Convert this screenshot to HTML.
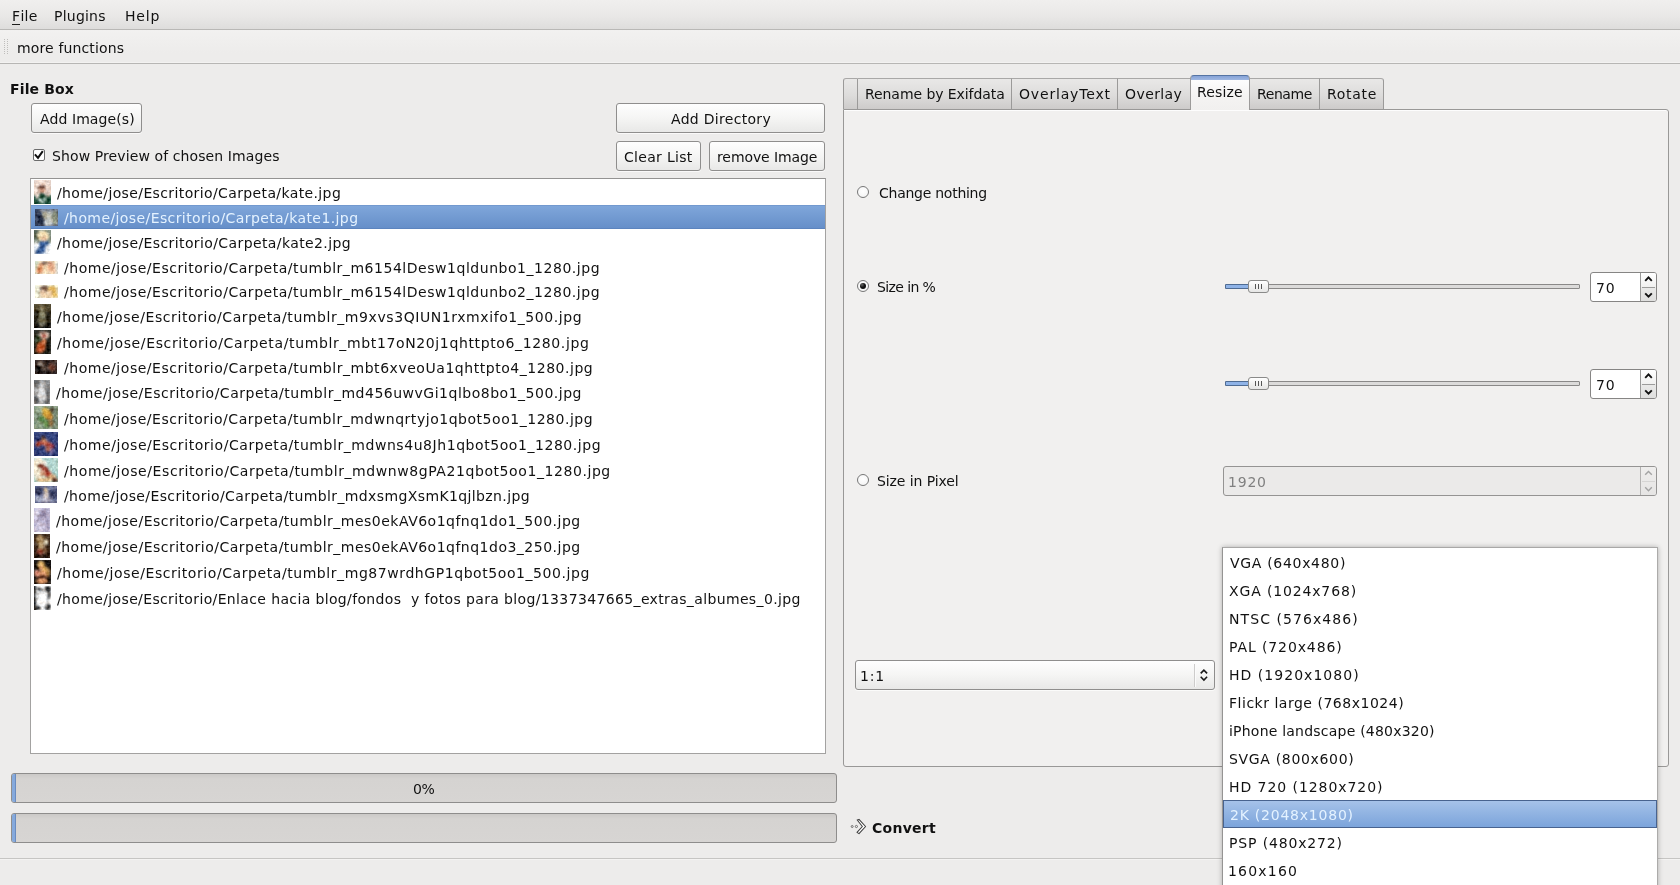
<!DOCTYPE html>
<html lang="en">
<head>
<meta charset="utf-8">
<title>Image converter</title>
<style>
html,body{margin:0;padding:0}
body{width:1680px;height:885px;overflow:hidden;position:relative;background:#edeceb;font-family:"DejaVu Sans","Liberation Sans",sans-serif;font-size:14px;color:#1a1a1a}
.a{position:absolute;box-sizing:border-box}
.t{position:absolute;will-change:transform;white-space:pre;line-height:20px;height:20px;color:#111}
.t.b{font-weight:bold}
.t.sel{color:#e4f2ff}
.t.dis{color:#808080}
.t u{text-decoration:none;border-bottom:1px solid #1c1c1c;display:inline-block;line-height:15px}
.th{position:absolute;display:block}
.btn{position:absolute;box-sizing:border-box;border:1px solid #8f8e8d;border-radius:3px;background:linear-gradient(#fefefe,#f5f5f4 50%,#e8e8e7);box-shadow:0 1px 0 rgba(255,255,255,.7)}
.tab{position:absolute;box-sizing:border-box;top:78px;height:31px;border:1px solid #9b9a99;border-top-color:#a9a8a7;border-bottom:none;border-left:none;background:linear-gradient(#e9e8e7,#dddcdb 55%,#cdcbca)}
.radio{position:absolute;box-sizing:border-box;width:12px;height:12px;border-radius:50%;border:1px solid #777;background:radial-gradient(circle at 50% 40%,#fff,#f2f2f2)}
.radio.on::after{content:"";position:absolute;left:2px;top:2px;width:6px;height:6px;border-radius:50%;background:radial-gradient(circle at 35% 30%,#666,#111 45%)}
.trough{position:absolute;box-sizing:border-box;height:5px;border:1px solid #8a8988;background:#dcdbda;border-radius:1px}
.fill{position:absolute;box-sizing:border-box;height:5px;border:1px solid #4f6c93;background:#8fb3e7;border-radius:1px}
.knob{position:absolute;box-sizing:border-box;width:21px;height:13px;border:1px solid #8a8a89;border-radius:3px;background:linear-gradient(#ffffff,#e6e6e5)}
.knob i{position:absolute;top:3px;width:1px;height:5px;background:#555}
.spin{position:absolute;box-sizing:border-box;border:1px solid #868584;border-radius:3px;background:#fff;overflow:hidden}
.spin .bt{position:absolute;right:0;top:0;bottom:0;width:15px;border-left:1px solid #9a9a99;background:linear-gradient(#ffffff,#f1f1f0 50%,#eaeae9 50%,#dfdfde)}
.spin .bt b{position:absolute;left:1px;right:1px;top:14px;height:1px;background:#9c9c9b}
.spin.dis{background:#ebeae9;border-color:#959493}
.spin.dis .bt{background:linear-gradient(#efeeed,#e6e5e4);border-left-color:#b3b2b1}
.spin.dis .bt b{background:#d6d5d4}
.prog{position:absolute;box-sizing:border-box;left:11px;width:826px;height:30px;border:1px solid #8e8d8c;border-radius:3px;background:linear-gradient(#cbc9c7,#d5d3d1 5px,#d7d5d3)}
.prog i{position:absolute;left:0;top:0;bottom:0;width:3px;background:#85a9dc;border-right:1px solid #6a8cc0;border-radius:2px 0 0 2px}
</style>
</head>
<body>
<svg width="0" height="0" style="position:absolute"><defs><filter id="bl" x="-10%" y="-10%" width="120%" height="120%" color-interpolation-filters="sRGB"><feGaussianBlur stdDeviation="0.8" result="b"/><feTurbulence type="fractalNoise" baseFrequency="0.32" numOctaves="2" seed="7" result="n"/><feColorMatrix in="n" type="matrix" values="0.5 0.5 0.3 0 0  0.4 0.5 0.4 0 0  0.3 0.5 0.5 0 0  0 0 0 0 1" result="m"/><feComposite in="b" in2="m" operator="arithmetic" k1="0" k2="1" k3="0.55" k4="-0.33"/></filter></defs></svg>

<!-- menubar -->
<div class="a" style="left:0;top:0;width:1680px;height:30px;background:linear-gradient(#f0efee,#e9e8e7 55%,#deddDC);border-bottom:1px solid #b9b8b6"></div>
<!-- toolbar -->
<div class="a" style="left:0;top:30px;width:1680px;height:33px;background:linear-gradient(#f2f1f0,#edeceb 70%)"></div>
<div class="a" style="left:0;top:62px;width:1680px;height:1px;background:#f3f2f1"></div>
<div class="a" style="left:0;top:63px;width:1680px;height:1px;background:#b7b6b4"></div>
<div class="a" style="left:4px;top:39px;width:1px;height:16px;background:repeating-linear-gradient(#bfbebc 0,#bfbebc 1px,transparent 1px,transparent 2px)"></div>
<div class="a" style="left:7px;top:39px;width:1px;height:16px;background:repeating-linear-gradient(#bfbebc 0,#bfbebc 1px,transparent 1px,transparent 2px)"></div>

<!-- left buttons -->
<div class="btn" style="left:31px;top:103px;width:111px;height:30px"></div>
<div class="btn" style="left:616px;top:103px;width:209px;height:30px"></div>
<div class="btn" style="left:616px;top:141px;width:85px;height:30px"></div>
<div class="btn" style="left:709px;top:141px;width:116px;height:30px"></div>

<!-- checkbox -->
<div class="a" style="left:33px;top:149px;width:12px;height:12px;border:1px solid #6c6c6c;background:#fff;border-radius:2px"></div>
<svg class="a" style="left:33px;top:147px" width="15" height="15" viewBox="0 0 15 15"><path d="M1.9 7.3 L5 10.9 L9.8 4.1" fill="none" stroke="#111" stroke-width="2"/></svg>

<!-- file list -->
<div class="a" style="left:30px;top:178px;width:796px;height:576px;background:#fff;border:1px solid #a3a2a1;border-top-color:#949392"></div>
<div class="a" style="left:31px;top:205px;width:794px;height:24px;background:linear-gradient(#7fa6da,#668fc9);border-top:1px solid #7299cf;border-bottom:1px solid #5c84be"></div>

<!-- progress bars -->
<div class="prog" style="top:773px"><i></i></div>
<div class="prog" style="top:813px"><i></i></div>

<!-- bottom separator -->
<div class="a" style="left:0;top:858px;width:1680px;height:1px;background:#c6c5c3"></div>
<div class="a" style="left:0;top:859px;width:1680px;height:1px;background:#f4f3f2"></div>

<!-- notebook -->
<div class="a" style="left:843px;top:109px;width:826px;height:658px;background:#f1f0ef;border:1px solid #999897;border-radius:0 3px 3px 3px;box-shadow:inset 0 1px 0 #fdfdfd"></div>
<div class="tab" style="left:843px;width:15px;border-left:1px solid #9b9a99;border-radius:3px 0 0 0"></div>
<div class="tab" style="left:858px;width:154px"></div>
<div class="tab" style="left:1012px;width:106px"></div>
<div class="tab" style="left:1118px;width:73px"></div>
<div class="tab" style="left:1250px;width:70px"></div>
<div class="tab" style="left:1320px;width:64px;border-radius:0 3px 0 0"></div>
<div class="a" style="left:1190px;top:75px;width:60px;height:35px;border:1px solid #9c9b9a;border-top-color:#5574a3;border-bottom:none;border-radius:4px 4px 0 0;background:linear-gradient(#86a3d7 0,#9fb7e1 4px,#fdfdfd 4px,#f4f3f2 60%,#f1f0ef)"></div>

<!-- radios -->
<div class="radio" style="left:857px;top:186px"></div>
<div class="radio on" style="left:857px;top:280px"></div>
<div class="radio" style="left:857px;top:474px"></div>

<!-- sliders -->
<div class="trough" style="left:1225px;top:284px;width:355px"></div>
<div class="fill" style="left:1225px;top:284px;width:26px"></div>
<div class="knob" style="left:1248px;top:280px"><i style="left:6px"></i><i style="left:9px"></i><i style="left:12px"></i></div>
<div class="trough" style="left:1225px;top:381px;width:355px"></div>
<div class="fill" style="left:1225px;top:381px;width:26px"></div>
<div class="knob" style="left:1248px;top:377px"><i style="left:6px"></i><i style="left:9px"></i><i style="left:12px"></i></div>

<!-- spin boxes -->
<div class="spin" style="left:1590px;top:272px;width:67px;height:30px"><div class="bt"><b></b>
<svg class="a" style="left:0;top:0" width="16" height="28" viewBox="0 0 16 28"><path d="M4.2 7.8 L7.5 4.4 L10.8 7.8 M4.2 20.3 L7.5 23.7 L10.8 20.3" fill="none" stroke="#111" stroke-width="1.9"/></svg></div></div>
<div class="spin" style="left:1590px;top:369px;width:67px;height:30px"><div class="bt"><b></b>
<svg class="a" style="left:0;top:0" width="16" height="28" viewBox="0 0 16 28"><path d="M4.2 7.8 L7.5 4.4 L10.8 7.8 M4.2 20.3 L7.5 23.7 L10.8 20.3" fill="none" stroke="#111" stroke-width="1.9"/></svg></div></div>
<div class="spin dis" style="left:1223px;top:466px;width:434px;height:30px"><div class="bt"><b></b>
<svg class="a" style="left:0;top:0" width="16" height="28" viewBox="0 0 16 28"><path d="M4.2 7.8 L7.5 4.4 L10.8 7.8 M4.2 20.3 L7.5 23.7 L10.8 20.3" fill="none" stroke="#a3a3a3" stroke-width="1.4"/></svg></div></div>

<!-- combo -->
<div class="btn" style="left:855px;top:660px;width:360px;height:30px"></div>
<div class="a" style="left:1194px;top:664px;width:2px;height:23px;background:linear-gradient(90deg,#cdcccb 50%,#fbfbfb 50%)"></div>
<svg class="a" style="left:1197px;top:665px" width="14" height="20" viewBox="0 0 14 20"><path d="M3.7 8.4 L6.9 5.1 L10.1 8.4 M3.7 11.8 L6.9 15 L10.1 11.8" fill="none" stroke="#1a1a1a" stroke-width="1.6"/></svg>

<!-- convert icon -->
<svg class="a" style="left:850px;top:818px" width="18" height="18" viewBox="0 0 18 18"><circle cx="2.2" cy="8.5" r="1" fill="none" stroke="#555" stroke-width=".8"/><circle cx="6.4" cy="8.5" r="1.1" fill="none" stroke="#555" stroke-width=".8"/><path d="M7.2 2 L9 1.4 L15.6 8.5 L9 15.6 L7 14.4 L12.4 8.5 Z" fill="#fff" stroke="#3c3c3c" stroke-width="1.05" stroke-linejoin="round"/></svg>

<!-- dropdown popup -->
<div class="a" style="left:1222px;top:547px;width:436px;height:345px;background:#fff;border:1px solid #959493;border-top-color:#a9a8a7;border-right-color:#acabaa;box-shadow:0 0 5px rgba(0,0,0,.28)"></div>
<div class="a" style="left:1223px;top:800px;width:434px;height:28px;background:linear-gradient(#a6c2e9,#90b3e2 50%,#7ca4db);border:1px solid #48638f"></div>

<svg class="th" style="left:34px;top:180px" width="17" height="24" viewBox="0 0 17 24"><g filter="url(#bl)"><rect x="-4" y="-4" width="25" height="32" fill="#dcc8bd"/><ellipse cx="8" cy="6" rx="7" ry="6" fill="#ead6cb"/><rect x="-2" y="15" width="21" height="12" fill="#12432f"/><ellipse cx="8" cy="9" rx="3.2" ry="4.5" fill="#b98268"/><ellipse cx="8" cy="7" rx="3.5" ry="1.2" fill="#4a2f2a"/><ellipse cx="3" cy="13" rx="2.5" ry="6" fill="#e3cfc4"/><ellipse cx="14" cy="12" rx="2.5" ry="5" fill="#d9c4b8"/><ellipse cx="8" cy="15" rx="2.5" ry="2" fill="#0f3a2a"/><ellipse cx="6" cy="20" rx="2" ry="1.5" fill="#dfe9e2"/><ellipse cx="11" cy="19" rx="1.5" ry="1.5" fill="#cfe0d6"/><ellipse cx="9" cy="22" rx="2" ry="1" fill="#e6efe9"/></g></svg>
<svg class="th" style="left:35px;top:209px" width="23" height="17" viewBox="0 0 23 17"><g filter="url(#bl)"><rect x="-4" y="-4" width="31" height="25" fill="#55607a"/><rect x="-2" y="-2" width="9" height="21" fill="#2b3650"/><ellipse cx="10" cy="6" rx="3" ry="5" fill="#a9a58f"/><ellipse cx="15" cy="8" rx="3" ry="6" fill="#b9bab0"/><ellipse cx="20" cy="8" rx="3" ry="7" fill="#7f8570"/><ellipse cx="13" cy="14" rx="4" ry="3" fill="#d0d3cf"/><ellipse cx="12" cy="2" rx="8" ry="1.5" fill="#8e939a"/><ellipse cx="7" cy="12" rx="2" ry="5" fill="#1c2438"/><ellipse cx="20" cy="14" rx="2" ry="2" fill="#b8b890"/></g></svg>
<svg class="th" style="left:34px;top:230px" width="17" height="24" viewBox="0 0 17 24"><g filter="url(#bl)"><rect x="-4" y="-4" width="25" height="32" fill="#7c8878"/><rect x="-2" y="-2" width="6" height="12" fill="#4f5a4a"/><ellipse cx="9" cy="6" rx="6" ry="5.5" fill="#ecd9ae"/><ellipse cx="10" cy="9" rx="3" ry="3" fill="#dcb492"/><rect x="-2" y="13" width="21" height="13" fill="#dfe4ea"/><ellipse cx="8" cy="17" rx="4" ry="6" fill="#2c528e"/><ellipse cx="5" cy="22" rx="4" ry="2.5" fill="#274a82"/><ellipse cx="14" cy="20" rx="3" ry="4" fill="#eef0f2"/><ellipse cx="3" cy="15" rx="2.5" ry="3" fill="#f2f3f4"/><ellipse cx="12" cy="13" rx="3" ry="2" fill="#35598f"/></g></svg>
<svg class="th" style="left:35px;top:261px" width="23" height="13" viewBox="0 0 23 13"><g filter="url(#bl)"><rect x="-4" y="-4" width="31" height="21" fill="#ecd9ba"/><rect x="-2" y="-2" width="6" height="17" fill="#c9cfb6"/><ellipse cx="6" cy="7" rx="3.5" ry="4.5" fill="#de9466"/><ellipse cx="4" cy="10" rx="3" ry="2.5" fill="#d88458"/><ellipse cx="11" cy="8" rx="3.5" ry="4" fill="#ebd3ae"/><ellipse cx="16" cy="6" rx="3.5" ry="4.5" fill="#dfa17c"/><ellipse cx="9" cy="2" rx="3" ry="1.5" fill="#5a4038"/><ellipse cx="15" cy="2" rx="2.5" ry="1.2" fill="#a86850"/><rect x="21" y="-2" width="4" height="17" fill="#d5d9d6"/><ellipse cx="18" cy="10" rx="3" ry="2.5" fill="#e6b896"/></g></svg>
<svg class="th" style="left:35px;top:285px" width="23" height="13" viewBox="0 0 23 13"><g filter="url(#bl)"><rect x="-4" y="-4" width="31" height="21" fill="#e9e5cf"/><ellipse cx="9" cy="4" rx="4" ry="3.5" fill="#5f4234"/><ellipse cx="8" cy="8" rx="3" ry="3.5" fill="#e6c4a4"/><ellipse cx="17" cy="5" rx="4.5" ry="4" fill="#d6a648"/><ellipse cx="15" cy="8" rx="2.5" ry="3" fill="#e9c9a6"/><ellipse cx="12" cy="11" rx="7" ry="2.5" fill="#e2c49c"/><ellipse cx="20" cy="10" rx="2.5" ry="2.5" fill="#dcb04e"/><ellipse cx="2" cy="7" rx="2.5" ry="6" fill="#e3e2cc"/></g></svg>
<svg class="th" style="left:34px;top:304px" width="17" height="24" viewBox="0 0 17 24"><g filter="url(#bl)"><rect x="-4" y="-4" width="25" height="32" fill="#2a2416"/><rect x="-2" y="-2" width="21" height="9" fill="#4c4228"/><ellipse cx="8" cy="5" rx="2.2" ry="2.8" fill="#8f8462"/><ellipse cx="8" cy="12" rx="4" ry="6" fill="#666248"/><ellipse cx="8" cy="10" rx="2.5" ry="3" fill="#8a8668"/><rect x="-2" y="19" width="21" height="8" fill="#0b0a07"/><ellipse cx="8" cy="18" rx="6" ry="1.2" fill="#7f7a5e"/><ellipse cx="8" cy="21" rx="4" ry="0.7" fill="#c9c2a4"/><ellipse cx="2" cy="12" rx="2" ry="6" fill="#1a160d"/><ellipse cx="15" cy="12" rx="2" ry="6" fill="#1c180e"/></g></svg>
<svg class="th" style="left:34px;top:330px" width="17" height="24" viewBox="0 0 17 24"><g filter="url(#bl)"><rect x="-4" y="-4" width="25" height="32" fill="#1c1c15"/><ellipse cx="10" cy="5" rx="5.5" ry="4" fill="#d6bcab"/><ellipse cx="10" cy="6" rx="2.5" ry="1.3" fill="#a2382a"/><ellipse cx="9" cy="3" rx="3" ry="1" fill="#6a4a40"/><ellipse cx="4" cy="10" rx="2.5" ry="5" fill="#3a4a30"/><ellipse cx="7" cy="17" rx="4.5" ry="5.5" fill="#b04a20"/><ellipse cx="10" cy="12" rx="2.5" ry="3" fill="#c46a3a"/><ellipse cx="5" cy="20" rx="3" ry="3" fill="#c2562a"/><ellipse cx="14" cy="17" rx="2" ry="6" fill="#15140f"/><ellipse cx="2" cy="3" rx="2" ry="3" fill="#2a2a22"/></g></svg>
<svg class="th" style="left:35px;top:360px" width="22" height="14" viewBox="0 0 22 14"><g filter="url(#bl)"><rect x="-4" y="-4" width="30" height="22" fill="#2b1d19"/><ellipse cx="5" cy="4" rx="2.5" ry="2" fill="#b9a898"/><ellipse cx="3" cy="9" rx="3" ry="4" fill="#0f0b0a"/><ellipse cx="9" cy="7" rx="3" ry="4" fill="#5a4a40"/><ellipse cx="12" cy="4" rx="2" ry="3" fill="#1a1210"/><ellipse cx="15" cy="8" rx="1.8" ry="1.5" fill="#e8dcd4"/><ellipse cx="17" cy="7" rx="3.5" ry="4" fill="#6e3c2c"/><ellipse cx="20" cy="3" rx="2.5" ry="2.5" fill="#4a3a34"/><ellipse cx="11" cy="12" rx="8" ry="1.5" fill="#140e0c"/></g></svg>
<svg class="th" style="left:34px;top:380px" width="16" height="24" viewBox="0 0 16 24"><g filter="url(#bl)"><rect x="-4" y="-4" width="24" height="32" fill="#8c8c8c"/><rect x="-2" y="-2" width="8" height="8" fill="#5e5e5e"/><ellipse cx="8" cy="5" rx="3" ry="3" fill="#bdbdbd"/><ellipse cx="7" cy="13" rx="3.5" ry="7" fill="#dedede"/><ellipse cx="10" cy="16" rx="2.5" ry="4" fill="#cfcfcf"/><ellipse cx="4" cy="11" rx="1.5" ry="4" fill="#c4c4c4"/><ellipse cx="14" cy="12" rx="2" ry="8" fill="#6c6c6c"/><ellipse cx="2" cy="20" rx="2" ry="3" fill="#3c3c3c"/><ellipse cx="13" cy="22" rx="3" ry="1.5" fill="#4a4a4a"/><ellipse cx="8" cy="22" rx="3" ry="1.5" fill="#b0b0b0"/></g></svg>
<svg class="th" style="left:34px;top:406px" width="24" height="23" viewBox="0 0 24 23"><g filter="url(#bl)"><rect x="-4" y="-4" width="32" height="31" fill="#7a8c76"/><ellipse cx="5" cy="4" rx="4" ry="5" fill="#93a58a"/><ellipse cx="13" cy="8" rx="4.5" ry="5" fill="#c9962e"/><ellipse cx="11" cy="4" rx="3" ry="2.5" fill="#d9b048"/><ellipse cx="18" cy="4" rx="2.2" ry="2.2" fill="#3a2a1a"/><ellipse cx="16" cy="11" rx="3" ry="3" fill="#b87a28"/><ellipse cx="8" cy="13" rx="3.5" ry="3" fill="#4d7a3c"/><ellipse cx="17" cy="17" rx="2.5" ry="4" fill="#7a5a30"/><ellipse cx="12" cy="18" rx="2.5" ry="3.5" fill="#5f8a48"/><ellipse cx="4" cy="19" rx="4" ry="3" fill="#8a9c80"/><ellipse cx="21" cy="12" rx="2" ry="5" fill="#6c7e6a"/></g></svg>
<svg class="th" style="left:34px;top:432px" width="24" height="24" viewBox="0 0 24 24"><g filter="url(#bl)"><rect x="-4" y="-4" width="32" height="32" fill="#2d3b72"/><ellipse cx="9" cy="6" rx="2.5" ry="2.2" fill="#3a2420"/><ellipse cx="10" cy="9" rx="3" ry="2.5" fill="#c28866"/><ellipse cx="6" cy="11" rx="4" ry="2" fill="#a8402e"/><ellipse cx="13" cy="12" rx="4" ry="2.5" fill="#b8563e"/><ellipse cx="17" cy="14" rx="3.5" ry="2.5" fill="#8f2c34"/><ellipse cx="14" cy="17" rx="2.5" ry="3" fill="#b06a5a"/><ellipse cx="4" cy="13" rx="2.5" ry="1.5" fill="#b84a30"/><ellipse cx="18" cy="19" rx="2" ry="3" fill="#6a5a8a"/><ellipse cx="20" cy="5" rx="4" ry="4" fill="#34447e"/><ellipse cx="5" cy="21" rx="5" ry="3" fill="#27346a"/></g></svg>
<svg class="th" style="left:34px;top:458px" width="24" height="24" viewBox="0 0 24 24"><g filter="url(#bl)"><rect x="-4" y="-4" width="32" height="32" fill="#a6cbc4"/><ellipse cx="4" cy="10" rx="7" ry="11" fill="#eadfc8"/><ellipse cx="11" cy="5" rx="2" ry="2.5" fill="#f1ebe3"/><ellipse cx="7" cy="8" rx="3" ry="2" fill="#6e2a1c"/><ellipse cx="11" cy="12" rx="3.5" ry="3.5" fill="#8a2c1e"/><ellipse cx="14" cy="16" rx="3.5" ry="3" fill="#a63a2a"/><ellipse cx="9" cy="15" rx="2.5" ry="3" fill="#c89070"/><ellipse cx="18" cy="19" rx="4" ry="2.5" fill="#c99a6a"/><ellipse cx="21" cy="22" rx="3" ry="2" fill="#5a3020"/><ellipse cx="10" cy="22" rx="8" ry="2.5" fill="#d8b483"/><ellipse cx="20" cy="6" rx="4" ry="5" fill="#b2d3cc"/></g></svg>
<svg class="th" style="left:35px;top:486px" width="22" height="17" viewBox="0 0 22 17"><g filter="url(#bl)"><rect x="-4" y="-4" width="30" height="25" fill="#4d5378"/><ellipse cx="4" cy="5" rx="4" ry="3.5" fill="#2c3150"/><ellipse cx="18" cy="8" rx="4" ry="5" fill="#343a5c"/><ellipse cx="11" cy="4" rx="2.2" ry="3" fill="#d9c09a"/><ellipse cx="11" cy="10" rx="3" ry="4" fill="#cdbfb8"/><ellipse cx="11" cy="14" rx="5" ry="2.5" fill="#b9b3c0"/><ellipse cx="4" cy="13" rx="4" ry="3" fill="#aab0c6"/><ellipse cx="16" cy="2" rx="5" ry="1.5" fill="#7d86a8"/><ellipse cx="7" cy="9" rx="1.5" ry="3" fill="#6a6f92"/><ellipse cx="19" cy="15" rx="3" ry="1.5" fill="#8a8ea8"/></g></svg>
<svg class="th" style="left:34px;top:508px" width="16" height="24" viewBox="0 0 16 24"><g filter="url(#bl)"><rect x="-4" y="-4" width="24" height="32" fill="#b5adc7"/><ellipse cx="9" cy="7" rx="4.5" ry="5" fill="#8a809f"/><ellipse cx="3" cy="5" rx="3" ry="5" fill="#d3cde0"/><ellipse cx="8" cy="17" rx="5" ry="6" fill="#c0b8cf"/><ellipse cx="13" cy="15" rx="2.5" ry="6" fill="#a9a0bd"/><ellipse cx="4" cy="20" rx="3" ry="4" fill="#cac3d8"/><ellipse cx="9" cy="11" rx="2.5" ry="2.5" fill="#a79cb6"/></g></svg>
<svg class="th" style="left:34px;top:534px" width="16" height="24" viewBox="0 0 16 24"><g filter="url(#bl)"><rect x="-4" y="-4" width="24" height="32" fill="#2e1d11"/><ellipse cx="6" cy="6" rx="4" ry="5" fill="#a58558"/><ellipse cx="7" cy="12" rx="3" ry="4" fill="#b89a6c"/><ellipse cx="12" cy="8" rx="2" ry="3" fill="#e9e0c6"/><ellipse cx="6" cy="18" rx="3.5" ry="3" fill="#8a3c2a"/><ellipse cx="11" cy="16" rx="2.5" ry="4" fill="#6a4a30"/><ellipse cx="13" cy="3" rx="2.5" ry="3" fill="#4a3420"/><ellipse cx="3" cy="22" rx="4" ry="2" fill="#160c06"/><ellipse cx="12" cy="22" rx="3" ry="2" fill="#1e120a"/></g></svg>
<svg class="th" style="left:34px;top:560px" width="17" height="24" viewBox="0 0 17 24"><g filter="url(#bl)"><rect x="-4" y="-4" width="25" height="32" fill="#120d09"/><ellipse cx="7" cy="5" rx="3.5" ry="4" fill="#dcae62"/><ellipse cx="10" cy="10" rx="3" ry="4" fill="#d2a050"/><ellipse cx="7" cy="8" rx="2" ry="2.5" fill="#d99a70"/><ellipse cx="8" cy="15" rx="7" ry="4" fill="#d48c5e"/><ellipse cx="3" cy="13" rx="2.5" ry="3" fill="#e2917c"/><ellipse cx="8" cy="17" rx="5" ry="1.5" fill="#2c1210"/><ellipse cx="8" cy="21" rx="6" ry="3" fill="#cf8a5a"/><ellipse cx="14" cy="12" rx="2" ry="4" fill="#b98a4a"/><ellipse cx="15" cy="4" rx="2" ry="4" fill="#0c0806"/></g></svg>
<svg class="th" style="left:34px;top:586px" width="17" height="24" viewBox="0 0 17 24"><g filter="url(#bl)"><rect x="-4" y="-4" width="25" height="32" fill="#f1f1f1"/><rect x="-2" y="-2" width="4" height="30" fill="#101010"/><ellipse cx="3" cy="8" rx="1.5" ry="5" fill="#e8e8e8"/><ellipse cx="14" cy="3" rx="3" ry="3" fill="#141414"/><ellipse cx="15" cy="9" rx="1.5" ry="4" fill="#2a2a2a"/><ellipse cx="14" cy="16" rx="2" ry="3" fill="#e0e0e0"/><ellipse cx="14" cy="21" rx="3" ry="3" fill="#0e0e0e"/><ellipse cx="13" cy="20" rx="1.2" ry="1.2" fill="#d0d0d0"/><ellipse cx="8" cy="4" rx="2.5" ry="2.5" fill="#cfcfcf"/><ellipse cx="8" cy="4" rx="1.2" ry="1.2" fill="#555"/><ellipse cx="4" cy="22" rx="3" ry="2" fill="#2a2a2a"/><ellipse cx="9" cy="13" rx="2" ry="5" fill="#ffffff"/><ellipse cx="5" cy="3" rx="2" ry="2" fill="#3a3a3a"/></g></svg>
<div class="t" id="m1" style="left:12.00px;top:6px;letter-spacing:0.330px"><u>F</u>ile</div>
<div class="t" id="m2" style="left:54.00px;top:6px;letter-spacing:0.227px">Plugins</div>
<div class="t" id="m3" style="left:125.00px;top:6px;letter-spacing:0.800px">Help</div>
<div class="t" id="tb" style="left:17.00px;top:38px;letter-spacing:0.137px">more functions</div>
<div class="t b" id="fb" style="left:10.00px;top:79px;letter-spacing:0.147px">File Box</div>
<div class="t" id="b1" style="left:40.00px;top:109px;letter-spacing:0.089px">Add Image(s)</div>
<div class="t" id="cb" style="left:52.00px;top:146px;letter-spacing:0.101px">Show Preview of chosen Images</div>
<div class="t" id="b2" style="left:671.00px;top:109px;letter-spacing:0.303px">Add Directory</div>
<div class="t" id="b3" style="left:624.00px;top:147px;letter-spacing:0.305px">Clear List</div>
<div class="t" id="b4" style="left:717.00px;top:147px;letter-spacing:-0.090px">remove Image</div>
<div class="t" id="t1" style="left:865.00px;top:84px;letter-spacing:-0.070px">Rename by Exifdata</div>
<div class="t" id="t2" style="left:1019.00px;top:84px;letter-spacing:0.826px">OverlayText</div>
<div class="t" id="t3" style="left:1125.00px;top:84px;letter-spacing:0.412px">Overlay</div>
<div class="t" id="t4" style="left:1197.00px;top:82px;letter-spacing:0.157px">Resize</div>
<div class="t" id="t5" style="left:1257.00px;top:84px;letter-spacing:-0.413px">Rename</div>
<div class="t" id="t6" style="left:1327.00px;top:84px;letter-spacing:0.693px">Rotate</div>
<div class="t" id="r1" style="left:879.00px;top:183px;letter-spacing:-0.260px">Change nothing</div>
<div class="t" id="r2" style="left:877.00px;top:277px;letter-spacing:-0.601px">Size in %</div>
<div class="t" id="r3" style="left:877.00px;top:471px;letter-spacing:-0.091px">Size in Pixel</div>
<div class="t" id="s1" style="left:1596.00px;top:278px;letter-spacing:0.800px">70</div>
<div class="t" id="s2" style="left:1596.00px;top:375px;letter-spacing:0.800px">70</div>
<div class="t dis" id="s3" style="left:1228.00px;top:472px;letter-spacing:0.800px">1920</div>
<div class="t" id="c1" style="left:860.00px;top:666px;letter-spacing:0.800px">1:1</div>
<div class="t" id="p1" style="left:413.00px;top:779px;letter-spacing:-0.452px">0%</div>
<div class="t b" id="cv" style="left:872.00px;top:818px;letter-spacing:0.273px">Convert</div>
<div class="t" id="d0" style="left:1230.00px;top:553px;letter-spacing:0.689px">VGA (640x480)</div>
<div class="t" id="d1" style="left:1229.00px;top:581px;letter-spacing:0.853px">XGA (1024x768)</div>
<div class="t" id="d2" style="left:1229.00px;top:609px;letter-spacing:1.072px">NTSC (576x486)</div>
<div class="t" id="d3" style="left:1229.00px;top:637px;letter-spacing:0.892px">PAL (720x486)</div>
<div class="t" id="d4" style="left:1229.00px;top:665px;letter-spacing:1.033px">HD (1920x1080)</div>
<div class="t" id="d5" style="left:1229.00px;top:693px;letter-spacing:0.515px">Flickr large (768x1024)</div>
<div class="t" id="d6" style="left:1229.00px;top:721px;letter-spacing:0.216px">iPhone landscape (480x320)</div>
<div class="t" id="d7" style="left:1229.00px;top:749px;letter-spacing:0.668px">SVGA (800x600)</div>
<div class="t" id="d8" style="left:1229.00px;top:777px;letter-spacing:0.940px">HD 720 (1280x720)</div>
<div class="t sel" id="d9" style="left:1230.00px;top:805px;letter-spacing:0.771px">2K (2048x1080)</div>
<div class="t" id="d10" style="left:1229.00px;top:833px;letter-spacing:0.851px">PSP (480x272)</div>
<div class="t" id="d11" style="left:1228.00px;top:861px;letter-spacing:1.203px">160x160</div>
<div class="t" id="l0" style="left:57.00px;top:183px;letter-spacing:0.380px">/home/jose/Escritorio/Carpeta/kate.jpg</div>
<div class="t sel" id="l1" style="left:64.00px;top:208px;letter-spacing:0.405px">/home/jose/Escritorio/Carpeta/kate1.jpg</div>
<div class="t" id="l2" style="left:57.00px;top:233px;letter-spacing:0.395px">/home/jose/Escritorio/Carpeta/kate2.jpg</div>
<div class="t" id="l3" style="left:64.00px;top:258px;letter-spacing:0.535px">/home/jose/Escritorio/Carpeta/tumblr_m6154lDesw1qldunbo1_1280.jpg</div>
<div class="t" id="l4" style="left:64.00px;top:282px;letter-spacing:0.535px">/home/jose/Escritorio/Carpeta/tumblr_m6154lDesw1qldunbo2_1280.jpg</div>
<div class="t" id="l5" style="left:57.00px;top:307px;letter-spacing:0.575px">/home/jose/Escritorio/Carpeta/tumblr_m9xvs3QIUN1rxmxifo1_500.jpg</div>
<div class="t" id="l6" style="left:57.00px;top:333px;letter-spacing:0.632px">/home/jose/Escritorio/Carpeta/tumblr_mbt17oN20j1qhttpto6_1280.jpg</div>
<div class="t" id="l7" style="left:64.00px;top:358px;letter-spacing:0.538px">/home/jose/Escritorio/Carpeta/tumblr_mbt6xveoUa1qhttpto4_1280.jpg</div>
<div class="t" id="l8" style="left:56.00px;top:383px;letter-spacing:0.509px">/home/jose/Escritorio/Carpeta/tumblr_md456uwvGi1qlbo8bo1_500.jpg</div>
<div class="t" id="l9" style="left:64.00px;top:409px;letter-spacing:0.530px">/home/jose/Escritorio/Carpeta/tumblr_mdwnqrtyjo1qbot5oo1_1280.jpg</div>
<div class="t" id="l10" style="left:64.00px;top:435px;letter-spacing:0.559px">/home/jose/Escritorio/Carpeta/tumblr_mdwns4u8Jh1qbot5oo1_1280.jpg</div>
<div class="t" id="l11" style="left:64.00px;top:461px;letter-spacing:0.580px">/home/jose/Escritorio/Carpeta/tumblr_mdwnw8gPA21qbot5oo1_1280.jpg</div>
<div class="t" id="l12" style="left:64.00px;top:486px;letter-spacing:0.384px">/home/jose/Escritorio/Carpeta/tumblr_mdxsmgXsmK1qjlbzn.jpg</div>
<div class="t" id="l13" style="left:56.00px;top:511px;letter-spacing:0.493px">/home/jose/Escritorio/Carpeta/tumblr_mes0ekAV6o1qfnq1do1_500.jpg</div>
<div class="t" id="l14" style="left:56.00px;top:537px;letter-spacing:0.493px">/home/jose/Escritorio/Carpeta/tumblr_mes0ekAV6o1qfnq1do3_250.jpg</div>
<div class="t" id="l15" style="left:57.00px;top:563px;letter-spacing:0.570px">/home/jose/Escritorio/Carpeta/tumblr_mg87wrdhGP1qbot5oo1_500.jpg</div>
<div class="t" id="l16" style="left:57.00px;top:589px;letter-spacing:0.363px">/home/jose/Escritorio/Enlace hacia blog/fondos  y fotos para blog/1337347665_extras_albumes_0.jpg</div>
</body>
</html>
